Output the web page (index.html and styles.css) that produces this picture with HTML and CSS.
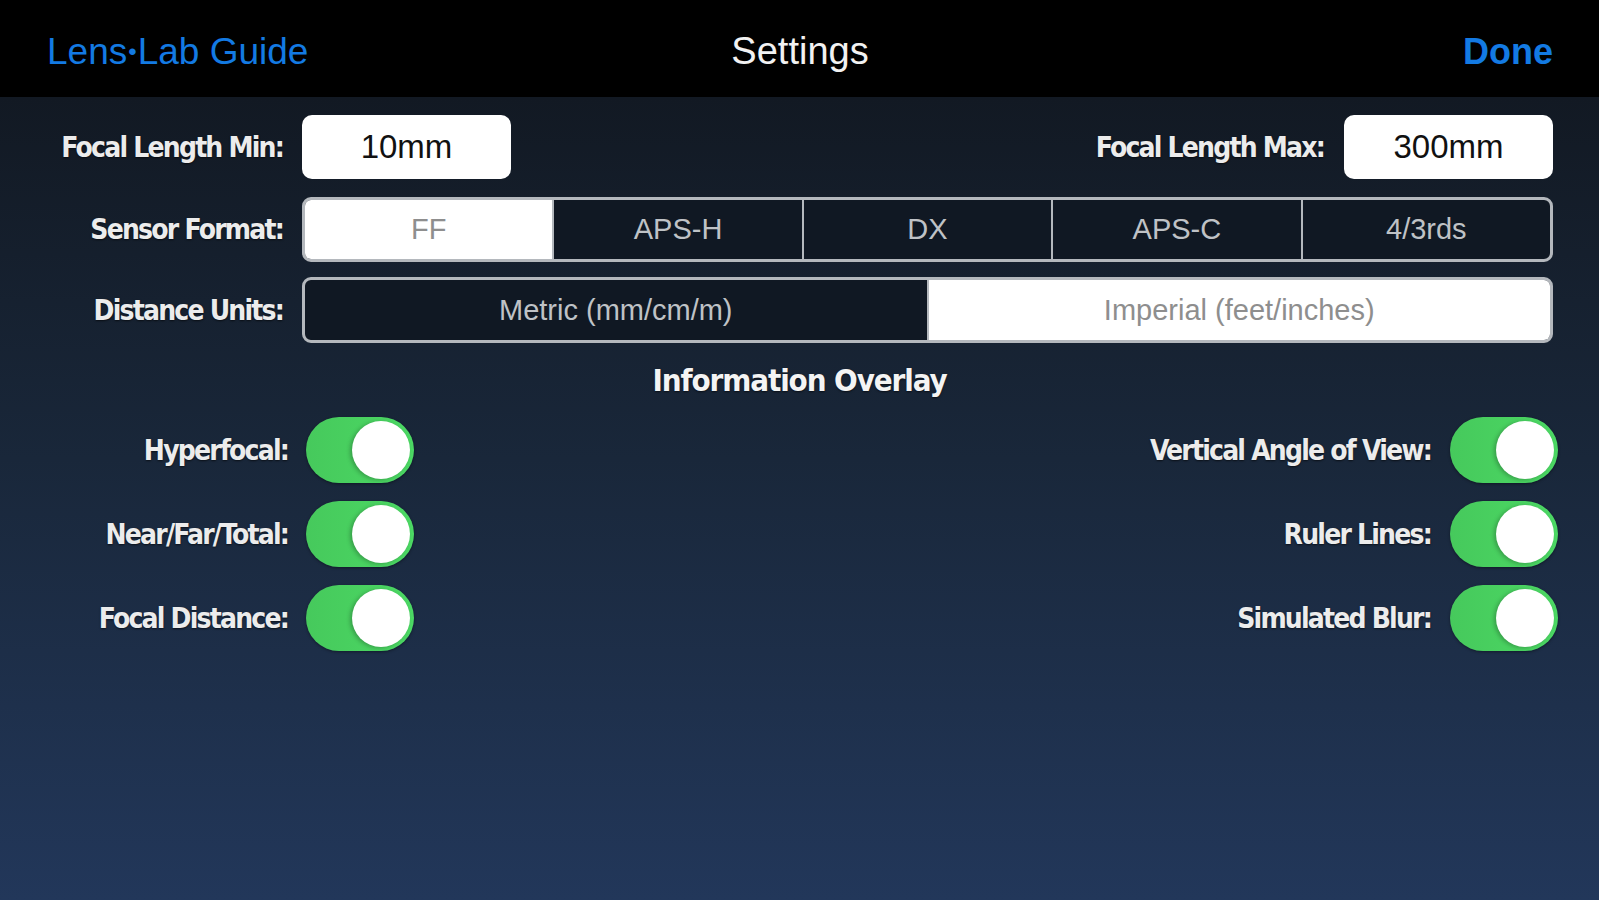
FILE: index.html
```html
<!DOCTYPE html>
<html lang="en">
<head>
    <meta charset="UTF-8">
    <title>Settings</title>
    <link rel="stylesheet" href="styles.css">
</head>
<body>
    <div class="app">
        <div class="header">
            <a class="nav-link back">Lens<span class="dot">•</span>Lab Guide</a>
            <div class="title">Settings</div>
            <a class="nav-link done">Done</a>
        </div>
        <div class="content">
            <div class="row">
                <label class="label">Focal Length Min:</label>
                <div class="field">10mm</div>
                <div class="row-right">
                    <label class="label label-auto">Focal Length Max:</label>
                    <div class="field">300mm</div>
                </div>
            </div>
            <div class="row row-seg">
                <label class="label">Sensor Format:</label>
                <div class="segmented">
                    <div class="segment selected">FF</div>
                    <div class="segment">APS-H</div>
                    <div class="segment">DX</div>
                    <div class="segment">APS-C</div>
                    <div class="segment">4/3rds</div>
                </div>
            </div>
            <div class="row row-units">
                <label class="label">Distance Units:</label>
                <div class="segmented">
                    <div class="segment">Metric (mm/cm/m)</div>
                    <div class="segment selected">Imperial (feet/inches)</div>
                </div>
            </div>
            <h2 class="section-title">Information Overlay</h2>
            <div class="toggles">
                <div class="toggle-row">
                    <span class="label toggle-label">Hyperfocal:</span>
                    <div class="switch on"><span class="knob"></span></div>
                </div>
                <div class="toggle-row right">
                    <span class="label">Vertical Angle of View:</span>
                    <div class="switch on"><span class="knob"></span></div>
                </div>
                <div class="toggle-row">
                    <span class="label toggle-label">Near/Far/Total:</span>
                    <div class="switch on"><span class="knob"></span></div>
                </div>
                <div class="toggle-row right">
                    <span class="label">Ruler Lines:</span>
                    <div class="switch on"><span class="knob"></span></div>
                </div>
                <div class="toggle-row">
                    <span class="label toggle-label">Focal Distance:</span>
                    <div class="switch on"><span class="knob"></span></div>
                </div>
                <div class="toggle-row right">
                    <span class="label">Simulated Blur:</span>
                    <div class="switch on"><span class="knob"></span></div>
                </div>
            </div>
        </div>
    </div>
</body>
</html>
```

FILE: styles.css
```css
:root {
    --ios-blue: #137ae3;
    --ios-green: #4cd964;
    --seg-border: #b4b8bd;
    --label-color: #ececec;
}

body {
    margin: 0;
    padding: 0;
    font-family: 'Liberation Sans', Arial, sans-serif;
    background-color: #000;
}

.app {
    height: 100vh;
    display: flex;
    flex-direction: column;
    overflow: hidden;
}

.header {
    height: 97px;
    box-sizing: border-box;
    flex-shrink: 0;
    background-color: #000;
    display: grid;
    grid-template-columns: 1fr auto 1fr;
    align-items: center;
    padding: 6px 46px 0 47px;
}

.nav-link {
    color: var(--ios-blue);
    font-size: 37px;
}

.nav-link .dot {
    font-size: 24px;
    vertical-align: 4px;
    margin: 0 1px;
}

.done {
    justify-self: end;
    font-weight: bold;
    font-size: 36px;
}

.title {
    color: #f2f2f2;
    font-size: 38px;
}

.content {
    flex: 1;
    background: linear-gradient(#121923 0%, #19273a 45%, #22375a 100%);
    padding: 18px 46px 0 0;
}

.row {
    display: flex;
    align-items: center;
    height: 64px;
}

.row-seg {
    height: 65px;
    margin-top: 18px;
}

.row-units {
    height: 66px;
    margin-top: 15px;
}

.label {
    width: 283px;
    flex-shrink: 0;
    margin-right: 19px;
    text-align: right;
    color: var(--label-color);
    font-family: 'Liberation Sans Narrow', 'DejaVu Sans Condensed', sans-serif;
    font-stretch: condensed;
    font-weight: bold;
    font-size: 28px;
    letter-spacing: -1.8px;
    text-shadow: 0 1px 2px rgba(0, 0, 0, 0.6);
}

.label-auto {
    width: auto;
    margin-right: 20px;
}

.field {
    width: 209px;
    height: 64px;
    box-sizing: border-box;
    background-color: #fff;
    border-radius: 10px;
    display: flex;
    align-items: center;
    justify-content: center;
    color: #111;
    font-size: 33px;
}

.row-right {
    margin-left: auto;
    display: flex;
    align-items: center;
}

.segmented {
    flex: 1;
    height: 100%;
    display: flex;
    box-sizing: border-box;
    border: 3px solid var(--seg-border);
    border-radius: 9px;
    overflow: hidden;
    background-color: #101823;
}

.segment {
    flex: 1;
    display: flex;
    align-items: center;
    justify-content: center;
    color: #bfc2c6;
    font-size: 29px;
    border-left: 2px solid var(--seg-border);
}

.segment:first-child {
    border-left: none;
}

.segment.selected {
    background-color: #fff;
    color: #8e8e8e;
}

.section-title {
    margin: 18px 0 0 46px;
    height: 38px;
    line-height: 38px;
    text-align: center;
    color: #f4f4f4;
    font-family: 'Liberation Sans Narrow', 'DejaVu Sans Condensed', sans-serif;
    font-stretch: condensed;
    font-weight: bold;
    font-size: 31px;
    letter-spacing: -1.1px;
    text-shadow: 0 1px 2px rgba(0, 0, 0, 0.6);
}

.toggles {
    margin: 18px -5px 0 0;
    display: grid;
    grid-template-columns: 1fr 1fr;
    row-gap: 18px;
}

.toggle-row {
    display: flex;
    align-items: center;
    height: 66px;
}

.toggle-row .label {
    width: auto;
    margin-right: 19px;
}

.toggle-row .toggle-label {
    width: 288px;
    margin-right: 18px;
}

.toggle-row.right {
    justify-content: flex-end;
}

.switch {
    width: 108px;
    height: 66px;
    box-sizing: border-box;
    border-radius: 33px;
    padding: 4px;
    display: flex;
    justify-content: flex-end;
    align-items: center;
    background: linear-gradient(90deg, #46c95c, var(--ios-green));
    box-shadow: 0 1px 3px rgba(0, 0, 0, 0.4);
}

.knob {
    width: 58px;
    height: 58px;
    border-radius: 50%;
    background-color: #fff;
    box-shadow: -2px 1px 4px rgba(0, 0, 0, 0.25);
}
```
